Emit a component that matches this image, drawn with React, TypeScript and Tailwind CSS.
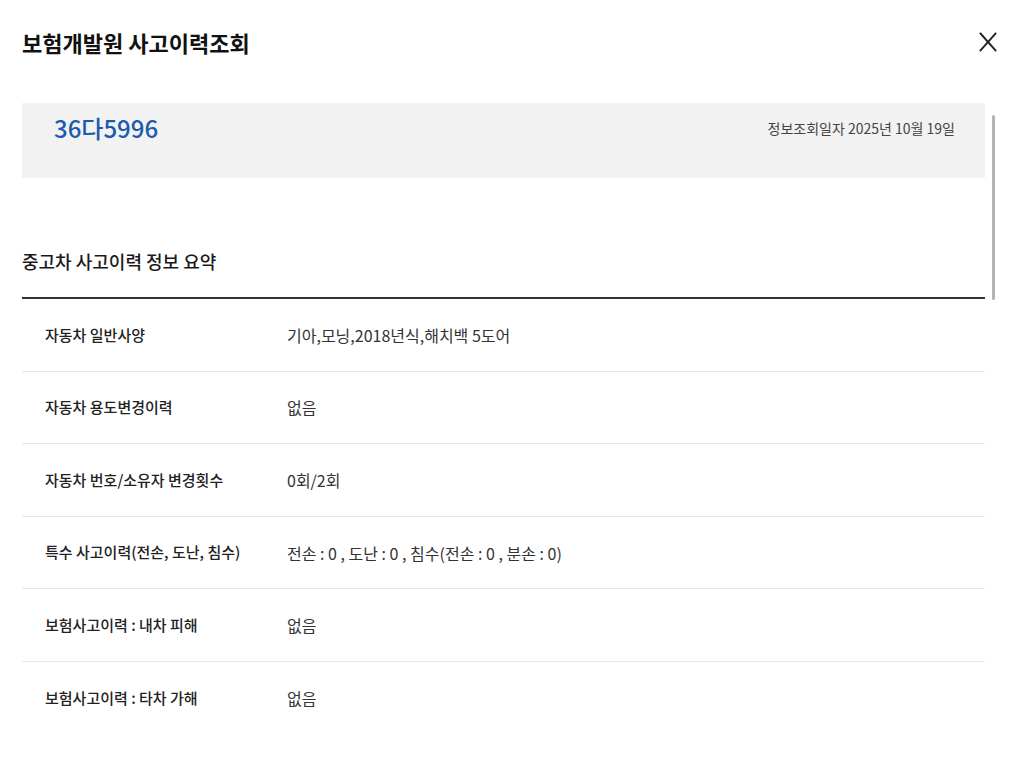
import React from 'react';

const rows: { label: string; value: string }[] = [
  { label: '자동차 일반사양', value: '기아,모닝,2018년식,해치백 5도어' },
  { label: '자동차 용도변경이력', value: '없음' },
  { label: '자동차 번호/소유자 변경횟수', value: '0회/2회' },
  { label: '특수 사고이력(전손, 도난, 침수)', value: '전손 : 0 , 도난 : 0 , 침수(전손 : 0 , 분손 : 0)' },
  { label: '보험사고이력 : 내차 피해', value: '없음' },
  { label: '보험사고이력 : 타차 가해', value: '없음' },
];

function CloseIcon() {
  return (
    <svg width="18" height="20" viewBox="0 0 18 20" fill="none" stroke="#222" strokeWidth="1.9" strokeLinecap="square">
      <path d="M1.5 1.5 L16.5 18.5" />
      <path d="M16.5 1.5 L1.5 18.5" />
    </svg>
  );
}

export default function App() {
  return (
    <div
      className="w-[1024px] h-[768px] overflow-hidden bg-white text-[#222]"
      style={{ fontFamily: '"Noto Sans CJK KR", "Noto Sans", sans-serif' }}
    >
      {/* Header */}
      <div className="h-[84px] flex items-center justify-between pl-[22px] pr-[27px]">
        <h1 className="text-[22px] font-bold text-[#111]">보험개발원 사고이력조회</h1>
        <button className="flex items-center justify-center">
          <CloseIcon />
        </button>
      </div>

      {/* Body */}
      <div className="flex mt-[19px] pl-[22px] pr-[29px]">
        <div className="flex-1">
          {/* Plate box */}
          <div className="h-[75px] bg-[#f2f2f2] pl-[32px] pr-[30px] pt-[9px]">
            <div className="h-[32px] flex items-center justify-between">
              <span className="text-[24px] font-medium text-[#1b5bae]">36다5996</span>
              <span className="text-[14px] text-[#444]">정보조회일자 2025년 10월 19일</span>
            </div>
          </div>

          {/* Summary */}
          <h2 className="mt-[71px] text-[18px] font-medium leading-[24px] text-[#1a1a1a]">
            중고차 사고이력 정보 요약
          </h2>
          <div className="mt-[24px] border-t-2 border-[#333]">
            {rows.map((row, i) => (
              <div
                key={row.label}
                className={
                  i < rows.length - 1
                    ? 'h-[72.6px] flex items-center border-b border-[#e8e8e8]'
                    : 'h-[72.6px] flex items-center'
                }
              >
                <div className="w-[265px] pl-[23px] text-[15px] font-medium text-[#222]">
                  {row.label}
                </div>
                <div className="text-[16px] text-[#333]">{row.value}</div>
              </div>
            ))}
          </div>
        </div>

        {/* Scroll indicator */}
        <div className="ml-[7px] mt-[12px] w-[3px] h-[185px] bg-[#b5b5b5] rounded-full" />
      </div>
    </div>
  );
}
